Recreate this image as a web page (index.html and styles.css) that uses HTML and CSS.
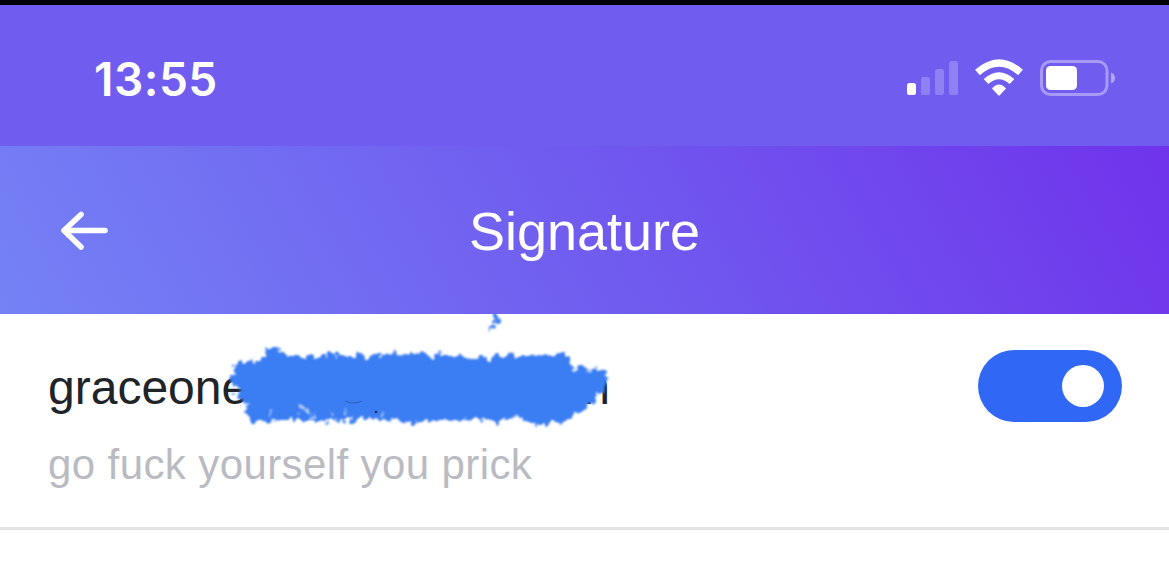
FILE: index.html
```html
<!DOCTYPE html>
<html lang="en">
<head>
  <meta charset="UTF-8" />
  <meta name="viewport" content="width=device-width, initial-scale=1.0"/>
  <title>Signature</title>
  <link rel="stylesheet" href="styles.css">
</head>
<body>
  <div class="status-bar">
    <span class="time">13:55</span>
    <div class="status-icons">
      <svg class="signal" width="52" height="36" viewBox="0 0 52 36" fill="#fff">
        <rect x="0" y="23" width="9" height="12" rx="2.5"/>
        <rect x="14" y="17" width="9" height="18" rx="2.5" opacity=".22"/>
        <rect x="28" y="9" width="9" height="26" rx="2.5" opacity=".22"/>
        <rect x="42" y="1" width="9" height="34" rx="2.5" opacity=".22"/>
      </svg>
      <svg class="wifi" width="50" height="38" viewBox="0 0 50 38">
        <path d="M3.500 13.500 Q25 -5.500 46.500 13.500" fill="none" stroke="#fff" stroke-width="7.200"/>
        <path d="M12 22.500 Q25 11 38 22.500" fill="none" stroke="#fff" stroke-width="6.800"/>
        <path d="M18 29.500 Q25 21.500 32 29.500 L26 36 Q25 37 24 36 Z" fill="#fff"/>
      </svg>
      <svg class="battery" width="76" height="38" viewBox="0 0 76 38">
        <rect x="1.500" y="2.500" width="65.500" height="33" rx="9" fill="none" stroke="#fff" stroke-width="3" stroke-opacity=".38"/>
        <rect x="6" y="7" width="31" height="24" rx="4.500" fill="#fff"/>
        <path d="M71 13.500 Q75 15 75 19 Q75 23 71 24.500 Z" fill="#fff" fill-opacity=".45"/>
      </svg>
    </div>
  </div>

  <header class="header">
    <svg class="back" width="50" height="42" viewBox="0 0 50 42" fill="none" stroke="#fff" stroke-width="5.600" stroke-linecap="round" stroke-linejoin="round">
      <path d="M5 21.500 H46 M22 5.500 L5 21.500 L22 38"/>
    </svg>
    <h1>Signature</h1>
  </header>

  <main class="row">
    <div class="row-text">
      <div class="account"><span>graceone</span><span>n</span></div>
      <div class="signature">go fuck yourself you prick</div>
    </div>
    <div class="toggle"><span class="knob"></span></div>

    <!-- marker stroke over the address -->
    <svg class="marker" width="420" height="130" viewBox="215 314 420 130">
      <defs>
        <filter id="rough" x="-10%" y="-20%" width="120%" height="140%">
          <feTurbulence type="fractalNoise" baseFrequency=".14" numOctaves="2" seed="8" result="noise"/>
          <feDisplacementMap in="SourceGraphic" in2="noise" scale="16" xChannelSelector="R" yChannelSelector="G"/>
          <feGaussianBlur stdDeviation=".9"/>
        </filter>
      </defs>
      <g filter="url(#rough)" fill="#3b7df2">
        <path d="M231 379 L234 366 L242 362 L264 359 L267 347 L281 350 L292 356 L330 356 L372 355 L410 354 L450 355 L470 358 L520 355 L567 354 L571 369 L606 370 L608 377 L603 391 L593 402 L578 414 L562 423 L530 425 L516 417 L500 421 L480 419 L440 420 L414 423 L380 418 L350 421 L318 420 L285 420 L260 422 L246 416 L247 405 L236 391 Z"/>
        <circle cx="494" cy="318" r="3"/>
        <circle cx="499" cy="321" r="3"/>
        <circle cx="491" cy="326" r="2.200"/>
      </g>
      <g fill="#fff" filter="url(#rough)" opacity=".7">
        <circle cx="301" cy="408" r="2.500"/>
        <circle cx="308" cy="411" r="2.500"/>
        <circle cx="298" cy="415" r="2"/>
        <circle cx="314" cy="416" r="2"/>
        <circle cx="332" cy="412" r="1.500"/>
        <circle cx="346" cy="411" r="1.800"/>
        <circle cx="269" cy="413" r="1.500"/>
        <circle cx="383" cy="413" r="1.500"/>
      </g>
      <path d="M345 401 Q353 405 362 401" fill="none" stroke="#2b5ba8" stroke-width=".8"/>
      <circle cx="376" cy="412" r="1.300" fill="#17345f"/>
    </svg>
  </main>
</body>
</html>
```

FILE: styles.css
```css
* {
  box-sizing: border-box;
}

body {
  margin: 0;
  background-color: #fff;
  font-family: "Liberation Sans", Arial, sans-serif;
}

.status-bar {
  display: flex;
  justify-content: space-between;
  align-items: center;
  height: 146px;
  padding: 5px 53px 0 94px;
  border-top: 5px solid #000;
  background-color: #705df0;
  color: #fff;
}

.time {
  margin-top: 1px;
  font-family: Inter, sans-serif;
  font-size: 46px;
  font-weight: 600;
  letter-spacing: 0.5px;
}

.status-icons {
  display: flex;
  align-items: center;
}

.wifi {
  margin-left: 15px;
}

.battery {
  margin-left: 16px;
}

.header {
  display: grid;
  grid-template-columns: 1fr auto 1fr;
  align-items: center;
  height: 168px;
  padding: 0 59px;
  background: linear-gradient(60deg, #7482f5 0%, #705cef 50%, #6f33eb 100%);
  color: #fff;
}

h1 {
  margin: 2px 0 0;
  font-size: 54px;
  font-weight: normal;
}

.row {
  position: relative;
  display: flex;
  justify-content: space-between;
  align-items: flex-start;
  height: 216px;
  padding: 36px 47px 0 48px;
  border-bottom: 3px solid #e2e2e3;
}

.account {
  display: flex;
  justify-content: space-between;
  width: 562px;
  margin-top: 10px;
  font-size: 48px;
  line-height: 56px;
  color: #202328;
}

.signature {
  margin-top: 25px;
  font-size: 42px;
  line-height: 48px;
  letter-spacing: 0.4px;
  color: #babbc2;
}

.toggle {
  display: flex;
  justify-content: flex-end;
  align-items: center;
  width: 144px;
  height: 72px;
  padding-right: 18px;
  border-radius: 36px;
  background-color: #3068f5;
}

.knob {
  width: 42px;
  height: 42px;
  border-radius: 50%;
  background-color: #fff;
}

.marker {
  position: absolute;
  top: 0;
  left: 215px;
}
```
